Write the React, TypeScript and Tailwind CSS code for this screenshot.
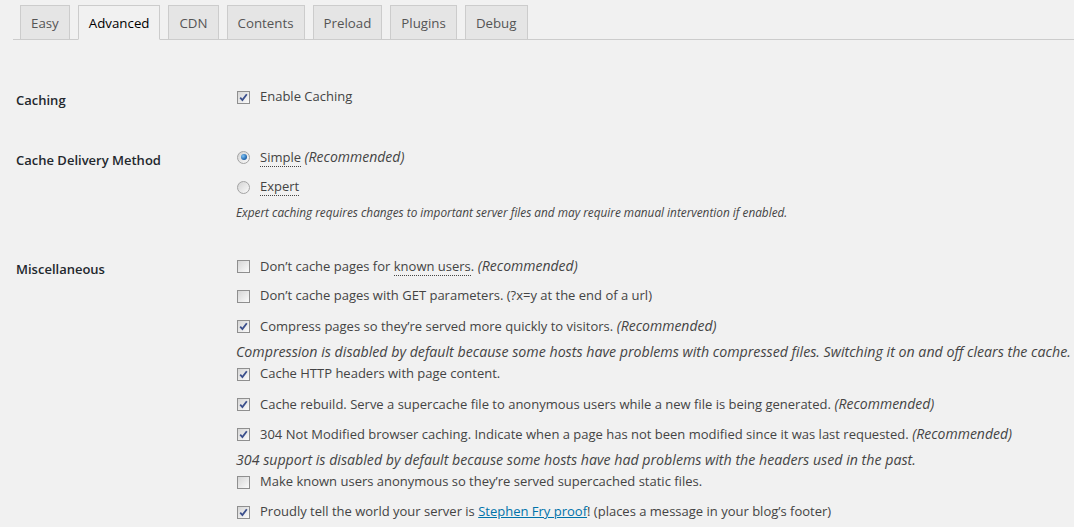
import type { ReactNode } from 'react';

const tabs = ['Easy', 'Advanced', 'CDN', 'Contents', 'Preload', 'Plugins', 'Debug'];

function Checkbox({ checked }: { checked?: boolean }) {
  return (
    <span className="relative inline-flex h-[13px] w-[13px] shrink-0 items-center justify-center border border-[#8f8f8f] bg-gradient-to-br from-[#d6d6d6] to-[#fbfbfb]">
      {checked && (
        <svg width="9" height="9" viewBox="0 0 9 9" className="absolute">
          <path d="M1.2 4.6 L3.4 7 L7.8 1.2" fill="none" stroke="#3b4f8c" strokeWidth="1.8" />
        </svg>
      )}
    </span>
  );
}

function Radio({ checked }: { checked?: boolean }) {
  return (
    <span className="relative inline-flex h-[13px] w-[13px] shrink-0 items-center justify-center rounded-full border border-[#a3a3a3] bg-gradient-to-br from-[#d4d4d4] to-[#fafafa]">
      {checked && (
        <span className="h-[6px] w-[6px] rounded-full bg-[radial-gradient(circle_at_35%_35%,#7ec3f5,#1a5fa8_70%)]" />
      )}
    </span>
  );
}

function Abbr({ children }: { children: ReactNode }) {
  return <span className="border-b border-dotted border-[#444]">{children}</span>;
}

function Rec() {
  return <em className="text-[14px]"> (Recommended)</em>;
}

function CheckRow({ checked, children }: { checked?: boolean; children: ReactNode }) {
  return (
    <div className="flex h-[30px] items-center">
      <span className="ml-px mr-[10px] flex">
        <Checkbox checked={checked} />
      </span>
      <span className="whitespace-nowrap">{children}</span>
    </div>
  );
}

function RadioRow({ checked, children }: { checked?: boolean; children: ReactNode }) {
  return (
    <div className="flex h-[30px] items-center">
      <span className="ml-px mr-[10px] flex">
        <Radio checked={checked} />
      </span>
      <span className="whitespace-nowrap">{children}</span>
    </div>
  );
}

function Desc({ children, small }: { children: ReactNode; small?: boolean }) {
  return (
    <div
      className={`flex h-[22px] items-center whitespace-nowrap italic ${small ? 'text-[11.8px]' : '-mb-[4px] text-[14.2px]'}`}
    >
      {children}
    </div>
  );
}

function Section({ label, className = '', children }: { label: string; className?: string; children: ReactNode }) {
  return (
    <div className={`flex ${className}`}>
      <div className="w-[236px] shrink-0 pl-4 pt-[8px] text-[13px] font-semibold leading-5 text-[#23282d]">{label}</div>
      <div className="flex flex-col">{children}</div>
    </div>
  );
}

export default function App() {
  return (
    <div className="h-[527px] w-[1074px] overflow-hidden bg-[#f1f1f1] text-[13px] text-[#444]" style={{ fontFamily: '"Segoe UI", "Open Sans", sans-serif' }}>
      {/* tab strip */}
      <div className="ml-[13px] flex h-[40px] items-end gap-2 border-b border-[#ccc] pl-[7px]">
        {tabs.map((t) => {
          const active = t === 'Advanced';
          return (
            <div
              key={t}
              className={`-mb-px flex h-[35px] items-center border border-[#ccc] px-[10px] pt-[3px] text-[13.3px] ${
                active ? 'border-b-[#f1f1f1] bg-[#f1f1f1] text-black' : 'bg-[#e5e5e5] text-[#555]'
              }`}
            >
              {t}
            </div>
          );
        })}
      </div>

      <Section label="Caching" className="mt-[42px]">
        <CheckRow checked>Enable Caching</CheckRow>
      </Section>

      <Section label="Cache Delivery Method" className="mt-[30px]">
        <RadioRow checked>
          <Abbr>Simple</Abbr>
          <Rec />
        </RadioRow>
        <RadioRow>
          <Abbr>Expert</Abbr>
        </RadioRow>
        <Desc small>Expert caching requires changes to important server files and may require manual intervention if enabled.</Desc>
      </Section>

      <Section label="Miscellaneous" className="mt-[27px]">
        <CheckRow>
          Don’t cache pages for <Abbr>known users</Abbr>.<Rec />
        </CheckRow>
        <CheckRow>Don’t cache pages with GET parameters. (?x=y at the end of a url)</CheckRow>
        <CheckRow checked>
          Compress pages so they’re served more quickly to visitors.<Rec />
        </CheckRow>
        <Desc>
          Compression is disabled by default because some hosts have problems with compressed files. Switching it on and off clears the cache.
        </Desc>
        <CheckRow checked>Cache HTTP headers with page content.</CheckRow>
        <CheckRow checked>
          Cache rebuild. Serve a supercache file to anonymous users while a new file is being generated.<Rec />
        </CheckRow>
        <CheckRow checked>
          304 Not Modified browser caching. Indicate when a page has not been modified since it was last requested.<Rec />
        </CheckRow>
        <Desc>304 support is disabled by default because some hosts have had problems with the headers used in the past.</Desc>
        <CheckRow>Make known users anonymous so they’re served supercached static files.</CheckRow>
        <CheckRow checked>
          Proudly tell the world your server is{' '}
          <a href="#" className="text-[#0073aa] underline">
            Stephen Fry proof
          </a>
          ! (places a message in your blog’s footer)
        </CheckRow>
      </Section>
    </div>
  );
}
